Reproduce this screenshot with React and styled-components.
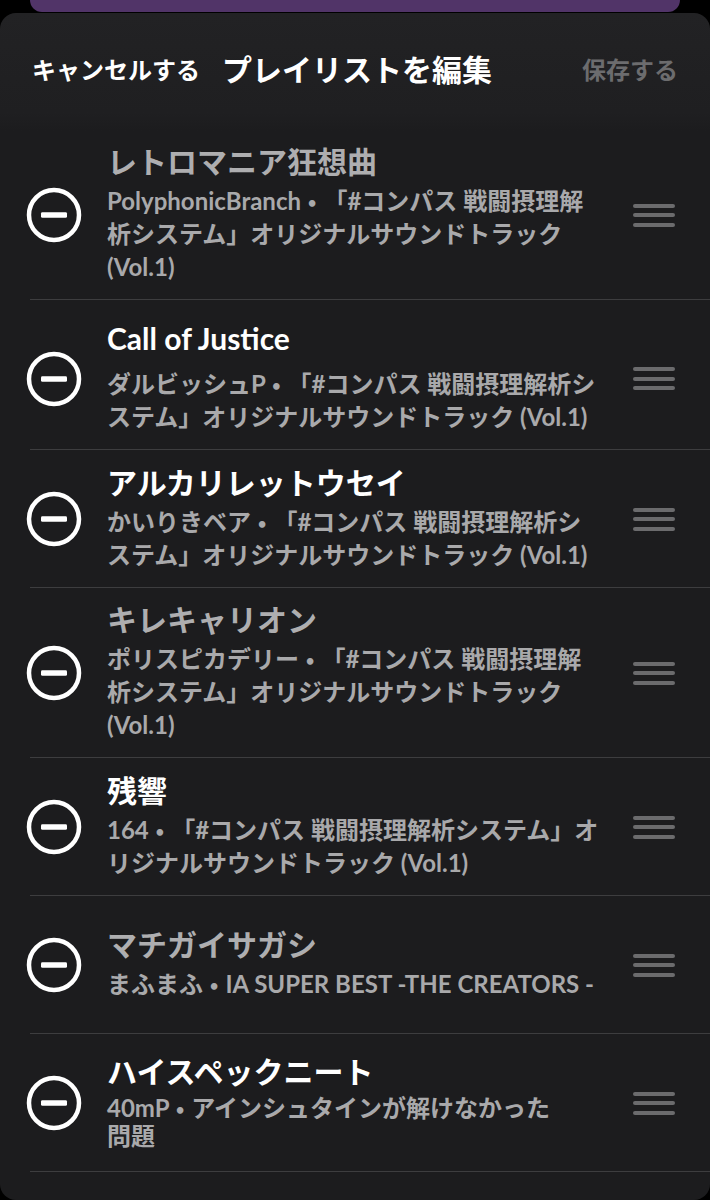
import React from "react";
import styled, { createGlobalStyle } from "styled-components";

const GlobalStyle = createGlobalStyle`
  html, body {
    margin: 0;
    padding: 0;
    background: #000;
  }
  body {
    font-family: "Lato", "Noto Sans CJK JP", sans-serif;
    -webkit-font-smoothing: antialiased;
  }
`;

const Page = styled.div`
  width: 710px;
  height: 1200px;
  background: #000;
  display: flex;
  flex-direction: column;
  overflow: hidden;
`;

const BackCard = styled.div`
  flex-shrink: 0;
  height: 12px;
  margin: 0 30px;
  background: #513468;
  border-radius: 0 0 24px 24px;
`;

const Sheet = styled.section`
  flex: 1;
  margin-top: 1px;
  display: flex;
  flex-direction: column;
  border-radius: 16px;
  overflow: hidden;
  background: linear-gradient(180deg, #222224 0px, #1f1f21 100px, #1c1c1e 118px, #1c1c1e 100%);
`;

const Header = styled.header`
  flex-shrink: 0;
  height: 110px;
  display: flex;
  align-items: center;
  gap: 22px;
  padding: 0 32px;
`;

const HeaderAction = styled.span`
  font-size: 24px;
  font-weight: 700;
  color: ${(p) => (p.$muted ? "#6c6c6e" : "#ffffff")};
  margin-left: ${(p) => (p.$end ? "auto" : "0")};
`;

const HeaderTitle = styled.h1`
  margin: 0;
  font-size: 30px;
  font-weight: 700;
  color: #ffffff;
`;

const List = styled.ul`
  list-style: none;
  margin: 7px 0 0;
  padding: 0;
`;

const Row = styled.li`
  display: flex;
  align-items: center;
  box-sizing: border-box;
  min-height: 138px;
  margin-left: 30px;
  padding: ${(p) => (p.$loose ? "19px" : "12px")} 35px 16px 0;
  border-bottom: 1px solid #3d3d3f;
`;

const RemoveButton = styled.svg`
  flex-shrink: 0;
  width: 56px;
  height: 56px;
  margin: 5px 0 0 -4px;
`;

const TrackText = styled.div`
  flex: 1;
  min-width: 0;
  display: flex;
  flex-direction: column;
  margin: 0 26px 0 25px;
`;

const TrackTitle = styled.div`
  font-size: 30px;
  font-weight: 700;
  line-height: 38px;
  white-space: nowrap;
  color: ${(p) => (p.$dim ? "#aeaeb0" : "#ffffff")};
`;

const TrackMeta = styled.div`
  margin-top: ${(p) => (p.$loose ? "10px" : "4px")};
  font-size: 24px;
  font-weight: 700;
  color: #a9a9ab;
`;

const MetaLine = styled.span`
  display: block;
  white-space: nowrap;
  line-height: ${(p) => (p.$tight ? "28px" : "33px")};
`;

const Bullet = styled.span`
  font-size: 15px;
  line-height: 1;
  vertical-align: 2px;
  margin: 0 1px;
`;

const DragHandle = styled.div`
  flex-shrink: 0;
  width: 42px;
  margin-top: 5px;
  display: flex;
  flex-direction: column;
  gap: 5.5px;
`;

const HandleBar = styled.span`
  display: block;
  height: 4px;
  border-radius: 2px;
  background: #6b6b6d;
`;

const tracks = [
  {
    title: "レトロマニア狂想曲",
    dim: true,
    lines: [
      "PolyphonicBranch • 「#コンパス 戦闘摂理解",
      "析システム」オリジナルサウンドトラック",
      "(Vol.1)",
    ],
  },
  {
    title: "Call of Justice",
    loose: true,
    lines: [
      "ダルビッシュP • 「#コンパス 戦闘摂理解析シ",
      "ステム」オリジナルサウンドトラック (Vol.1)",
    ],
  },
  {
    title: "アルカリレットウセイ",
    lines: [
      "かいりきベア • 「#コンパス 戦闘摂理解析シ",
      "ステム」オリジナルサウンドトラック (Vol.1)",
    ],
  },
  {
    title: "キレキャリオン",
    dim: true,
    lines: [
      "ポリスピカデリー • 「#コンパス 戦闘摂理解",
      "析システム」オリジナルサウンドトラック",
      "(Vol.1)",
    ],
  },
  {
    title: "残響",
    lines: [
      "164 • 「#コンパス 戦闘摂理解析システム」オ",
      "リジナルサウンドトラック (Vol.1)",
    ],
  },
  {
    title: "マチガイサガシ",
    dim: true,
    lines: ["まふまふ • IA SUPER BEST -THE CREATORS -"],
  },
  {
    title: "ハイスペックニート",
    tight: true,
    lines: ["40mP • アインシュタインが解けなかった", "問題"],
  },
];

function renderLine(line) {
  const parts = line.split(" • ");
  if (parts.length === 1) return line;
  return (
    <>
      {parts[0]} <Bullet>•</Bullet> {parts.slice(1).join(" • ")}
    </>
  );
}

function RemoveIcon() {
  return (
    <RemoveButton viewBox="0 0 56 56" aria-label="削除">
      <circle cx="28" cy="28" r="25" fill="none" stroke="#ffffff" strokeWidth="4.5" />
      <rect x="15" y="25.2" width="26" height="5.6" rx="1.4" fill="#ffffff" />
    </RemoveButton>
  );
}

function TrackRow({ track }) {
  return (
    <Row $loose={track.loose}>
      <RemoveIcon />
      <TrackText>
        <TrackTitle $dim={track.dim}>{track.title}</TrackTitle>
        <TrackMeta $loose={track.loose}>
          {track.lines.map((line, i) => (
            <MetaLine key={i} $tight={track.tight}>
              {renderLine(line)}
            </MetaLine>
          ))}
        </TrackMeta>
      </TrackText>
      <DragHandle aria-label="並べ替え">
        <HandleBar />
        <HandleBar />
        <HandleBar />
      </DragHandle>
    </Row>
  );
}

export default function App() {
  return (
    <>
      <GlobalStyle />
      <Page>
        <BackCard />
        <Sheet>
          <Header>
            <HeaderAction>キャンセルする</HeaderAction>
            <HeaderTitle>プレイリストを編集</HeaderTitle>
            <HeaderAction $muted $end>
              保存する
            </HeaderAction>
          </Header>
          <List>
            {tracks.map((t, i) => (
              <TrackRow key={i} track={t} />
            ))}
          </List>
        </Sheet>
      </Page>
    </>
  );
}
